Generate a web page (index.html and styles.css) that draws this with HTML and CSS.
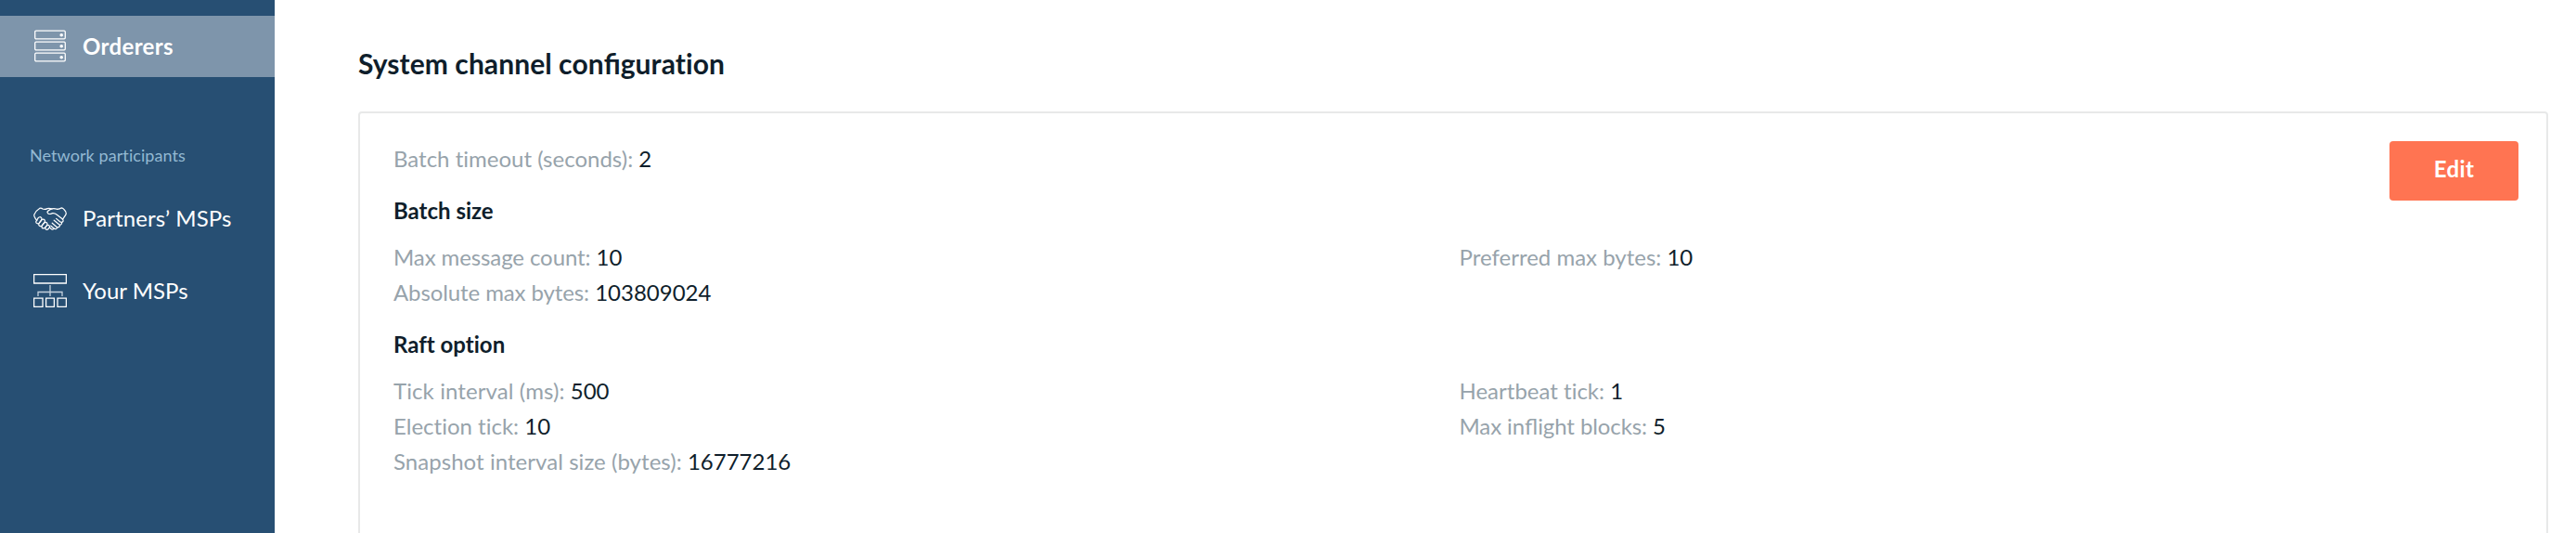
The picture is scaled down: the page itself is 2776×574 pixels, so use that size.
FILE: index.html
```html
<!DOCTYPE html>
<html lang="en">
<head>
<meta charset="utf-8">
<title>System channel configuration</title>
<link rel="stylesheet" href="styles.css">
</head>
<body>
<div class="layout">
  <nav class="sidebar">
    <a class="nav-item active">
      <svg class="icon" width="36" height="36" viewBox="0 0 36 36">
        <rect x="1.7" y="1.2" width="32.6" height="8.6" rx="1.2"/>
        <rect x="1.7" y="13.2" width="32.6" height="8.6" rx="1.2"/>
        <rect x="1.7" y="25.2" width="32.6" height="8.6" rx="1.2"/>
        <g class="dots"><circle cx="30.2" cy="5.700" r="1.8"/><circle cx="30.2" cy="17.700" r="1.8"/><circle cx="30.2" cy="29.700" r="1.8"/></g>
      </svg>
      <span>Orderers</span>
    </a>
    <div class="nav-title">Network participants</div>
    <a class="nav-item">
      <svg class="icon hands" width="36" height="24" viewBox="0 0 36 24">
        <path d="M3.8 14.6 Q.2 9.8 .8 8.2 Q3 3.4 6.6 1.4 Q8.4 .6 10 2 Q12.400 2.900 15 1.600 Q17.500 1.200 20 2"/>
        <path d="M25.600 2.300 Q28.500 1.900 30 .9 Q32 .8 34.600 4.600 Q35.800 7 34.800 8.400 L31.400 13.400"/>
        <path d="M25.600 2.300 Q21.500 .7 18.500 2.400 Q15 4.200 15 5.600 Q15.800 8.800 20.500 6.600 Q23 6.200 25 8 L31.500 13 Q33 15 31 16.200 Q29.800 16.700 28.600 15.800 L24.600 12.400"/>
        <path d="M30.600 16.400 Q30.800 19.400 28 19 L22.200 14.200 M28.500 19 Q28.600 22.300 25.400 21.700 L20.200 17.200 M25.800 21.700 Q24.800 24.400 22.400 23.200 L18.800 20.200 M22.500 23.200 Q20.800 25 18.600 23 L17.600 22"/>
        <path d="M3.200 14.800 L5.200 11.700 Q7 9.800 8.700 11.600 Q9.500 12.700 8.500 14.200 L6.300 17.100 Q4.500 18.500 3 16.900 Q2.300 15.800 3.200 14.800 Z"/>
        <path d="M6.300 17.100 L9.200 13.500 Q11 12.500 12.300 14.200 Q12.600 15.500 12 16.400 L9 20.200 Q7.300 21.300 5.900 19.700 Q5.300 18.500 6.300 17.100 Z"/>
        <path d="M9.500 19.600 L11.700 16.900 Q13.500 15.700 14.800 17.300 Q15.300 18.500 14.400 19.800 L12.200 22.600 Q10.500 23.600 9.100 22 Q8.600 20.800 9.500 19.600 Z"/>
        <path d="M12.900 21.800 L14.500 19.800 Q16.300 18.900 17.400 20.500 Q17.700 21.600 16.800 22.700 Q15.300 25 13.300 23.900 Q12.200 22.900 12.900 21.800 Z"/>
      </svg>
      <span>Partners’ MSPs</span>
    </a>
    <a class="nav-item plain">
      <svg class="icon tree" width="36" height="36" viewBox="0 0 36 36">
        <path d="M.6 .6H35.400V10H.6Z M.6 26.200H10V35.400H.6Z M13.600 26.200H22.400V35.400H13.600Z M26 26.200H35.400V35.400H26Z"/>
        <path class="links" d="M18 12V24 M5 24V19.500H31V24"/>
      </svg>
      <span>Your MSPs</span>
    </a>
  </nav>
  <main class="content">
    <h1 class="page-title">System channel con<span class="lig">fi</span>guration</h1>
    <section class="card">
      <div class="card-head">
        <div class="field"><span class="label">Batch timeout (seconds):</span> 2</div>
        <button class="edit">Edit</button>
      </div>
      <h2 class="group-title">Batch size</h2>
      <div class="fields">
        <div class="field"><span class="label tight">Max message count:</span> 10</div>
        <div class="field"><span class="label">Preferred max bytes:</span> 10</div>
        <div class="field"><span class="label tight">Absolute max bytes:</span> 103809024</div>
      </div>
      <h2 class="group-title">Raft option</h2>
      <div class="fields">
        <div class="field"><span class="label loose">Tick interval (ms):</span> 500</div>
        <div class="field"><span class="label">Heartbeat tick:</span> 1</div>
        <div class="field"><span class="label">Election tick:</span> 10</div>
        <div class="field"><span class="label tight">Max in<span class="lig">fl</span>ight blocks:</span> 5</div>
        <div class="field"><span class="label wide">Snapshot interval size (bytes):</span> 16777216</div>
      </div>
    </section>
  </main>
</div>
</body>
</html>
```
FILE: styles.css
```css
* { box-sizing: border-box; }
body {
  margin: 0;
  background: #fff;
  color: #0f1e2b;
  font: 24px/38px Lato, "Liberation Sans", sans-serif;
  font-variant-ligatures: none;
}
.lig { font-variant-ligatures: common-ligatures; letter-spacing: 0; }
.layout { display: flex; height: 574px; overflow: hidden; }
.sidebar {
  width: 296px;
  flex: none;
  padding-top: 17px;
  background: #274f73;
  color: #fff;
}
.nav-item {
  display: flex;
  align-items: center;
  gap: 17px;
  height: 66px;
  margin-bottom: 12px;
  padding-left: 36px;
  letter-spacing: .1px;
}
.nav-item.plain { letter-spacing: 0; }
.nav-item.active { background: #7e95ab; font-weight: 700; margin-bottom: 0; letter-spacing: .35px; }
.nav-title {
  margin: 72px 0 23px 32px;
  font-size: 18px;
  line-height: 24px;
  letter-spacing: .08px;
  color: #93b9d2;
}
.icon { flex: none; fill: none; stroke: #fff; stroke-width: 1.3; }
.icon .dots { fill: #fff; stroke: none; }
.hands { stroke-width: 1.2; stroke-linejoin: round; stroke-linecap: round; overflow: visible; }
.tree .links { stroke: #c3d0dc; }
.content { flex: 1; padding: 48px 30px 0 90px; }
.page-title { margin: 0 0 32px; font-size: 30px; line-height: 40px; font-weight: 700; letter-spacing: .07px; }
.card {
  height: 600px;
  padding: 30px 30px 0 36px;
  border: 2px solid #e8e9e9;
  border-radius: 4px;
}
.card-head { display: flex; justify-content: space-between; height: 38px; }
.label { color: #97a3ab; }
.tight { letter-spacing: -.1px; }
.loose { letter-spacing: .1px; }
.wide { letter-spacing: .05px; }
.edit {
  width: 139px;
  height: 64px;
  padding: 0 0 4px;
  border: 0;
  border-radius: 4px;
  background: #ff7452;
  color: #fff;
  font: 700 24px/60px Lato, sans-serif;
  letter-spacing: .4px;
}
.group-title { margin: 18px 0 12px; font-size: 24px; line-height: 38px; font-weight: 700; }
.fields { display: grid; grid-template-columns: 1fr 1fr; column-gap: 7px; }
```
